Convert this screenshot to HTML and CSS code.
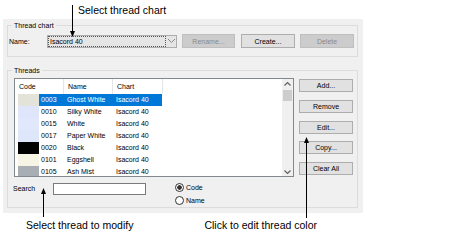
FILE: index.html
```html
<!DOCTYPE html>
<html lang="en">
<head>
	<meta charset="utf-8">
	<title>Thread chart</title>
	<link rel="stylesheet" href="styles.css">
</head>
<body>
<div class="page">

<div class="note top">Select thread chart</div>

<div class="dialog">
    <div class="group chart-group">
        <span class="legend">Thread chart</span>
        <div class="name-row">
            <label class="name-label">Name:</label>
            <div class="combo">
                <span class="value">Isacord 40</span>
                <svg class="chev" width="9" height="6" viewBox="0 0 9 6"><polyline points="1,1 4.5,4.5 8,1" fill="none" stroke="#8a8a8a" stroke-width="1"/></svg>
            </div>
            <button class="btn rename" disabled>Rename...</button>
            <button class="btn create">Create...</button>
            <button class="btn delete" disabled>Delete</button>
        </div>
    </div>

    <div class="group threads">
        <span class="legend">Threads</span>
        <div class="threads-body">
            <div class="list">
                <div class="table">
                    <div class="head">
                        <div class="col h-code">Code</div>
                        <div class="col h-name">Name</div>
                        <div class="col h-chart">Chart</div>
                    </div>
                    <div class="row selected">
                        <div class="swatch" style="background:#e4e3da"></div>
                        <div class="cells"><span class="c-code">0003</span><span class="c-name">Ghost White</span><span class="c-chart">Isacord 40</span></div>
                    </div>
                    <div class="row">
                        <div class="swatch" style="background:#dfe6fb"></div>
                        <div class="cells"><span class="c-code">0010</span><span class="c-name">Silky White</span><span class="c-chart">Isacord 40</span></div>
                    </div>
                    <div class="row">
                        <div class="swatch" style="background:#e1e8fb"></div>
                        <div class="cells"><span class="c-code">0015</span><span class="c-name">White</span><span class="c-chart">Isacord 40</span></div>
                    </div>
                    <div class="row">
                        <div class="swatch" style="background:#dee6fa"></div>
                        <div class="cells"><span class="c-code">0017</span><span class="c-name">Paper White</span><span class="c-chart">Isacord 40</span></div>
                    </div>
                    <div class="row">
                        <div class="swatch" style="background:#000000"></div>
                        <div class="cells"><span class="c-code">0020</span><span class="c-name">Black</span><span class="c-chart">Isacord 40</span></div>
                    </div>
                    <div class="row">
                        <div class="swatch" style="background:#f6f4e4"></div>
                        <div class="cells"><span class="c-code">0101</span><span class="c-name">Eggshell</span><span class="c-chart">Isacord 40</span></div>
                    </div>
                    <div class="row">
                        <div class="swatch" style="background:#a9aeb5"></div>
                        <div class="cells"><span class="c-code">0105</span><span class="c-name">Ash Mist</span><span class="c-chart">Isacord 40</span></div>
                    </div>
                </div>
                <div class="scrollbar">
                    <svg width="11" height="8" viewBox="0 0 11 8"><polyline points="2.5,5.5 5.5,2.5 8.5,5.5" fill="none" stroke="#606060" stroke-width="1.2"/></svg>
                    <div class="thumb"></div>
                    <div class="track"></div>
                    <svg width="11" height="8" viewBox="0 0 11 8"><polyline points="2.5,2.5 5.5,5.5 8.5,2.5" fill="none" stroke="#606060" stroke-width="1.2"/></svg>
                </div>
            </div>
            <div class="side">
                <button class="btn">Add...</button>
                <button class="btn">Remove</button>
                <button class="btn">Edit...</button>
                <button class="btn">Copy...</button>
                <button class="btn">Clear All</button>
            </div>
        </div>
        <div class="search-row">
            <label class="search-label">Search</label>
            <input class="search" type="text">
            <div class="radios">
                <div class="radio"><span class="dot checked"></span>Code</div>
                <div class="radio"><span class="dot"></span>Name</div>
            </div>
        </div>
    </div>
</div>

<div class="notes">
    <span class="note left">Select thread to modify</span>
    <span class="note right">Click to edit thread color</span>
</div>

<!-- callout arrows drawn over the dialog -->
<svg class="arrows" width="454" height="239" viewBox="0 0 454 239">
    <line x1="72.5" y1="5" x2="72.5" y2="32" stroke="#000" stroke-width="1"/>
    <polygon points="70,31 75,31 72.5,37" fill="#000"/>
    <line x1="43.5" y1="193" x2="43.5" y2="217" stroke="#000" stroke-width="1"/>
    <polygon points="41,194 46,194 43.5,188" fill="#000"/>
    <line x1="306.5" y1="142" x2="306.5" y2="218" stroke="#000" stroke-width="1"/>
    <polygon points="304,143 309,143 306.5,137" fill="#000"/>
</svg>

</div>
</body>
</html>
```

FILE: styles.css
```css
body {
    margin: 0;
    background: #fff;
    font-family: "Liberation Sans", Arial, sans-serif;
}
.page {
    position: relative;
    width: 454px;
    height: 239px;
}
.note {
    font-size: 10.5px;
    line-height: 14px;
    color: #000;
}
.note.top {
    height: 16px;
    padding: 3px 0 0 78px;
}

.dialog {
    box-sizing: border-box;
    margin-left: 3px;
    width: 360px;
    height: 194px;
    background: #f0f0f0;
    padding: 6px 0 0 4px;
    font-size: 7px;
    color: #000;
}
.group {
    position: relative;
    box-sizing: border-box;
    width: 351px;
    border: 1px solid #dcdcdc;
}
.group .legend {
    position: absolute;
    top: -5px;
    left: 4px;
    padding: 0 2px;
    background: #f0f0f0;
    line-height: 9px;
}

.btn {
    box-sizing: border-box;
    height: 14px;
    margin: 0;
    padding: 0;
    border: 1px solid #adadad;
    background: #e1e1e1;
    font-family: "Liberation Sans", Arial, sans-serif;
    font-size: 7px;
    color: #000;
}
.btn:disabled {
    background: #cccccc;
    border-color: #bfbfbf;
    color: #8a8a8a;
}

/* thread chart */
.chart-group { height: 32px; padding-top: 8px; }
.name-row {
    display: flex;
    align-items: center;
    height: 14px;
}
.name-label { width: 38px; padding-left: 1px; }
.combo {
    box-sizing: border-box;
    display: flex;
    align-items: center;
    width: 130px;
    height: 13px;
    border: 1px solid #adadad;
    background: #e5e5e5;
}
.combo .value {
    box-sizing: border-box;
    width: 118px;
    height: 11px;
    line-height: 9px;
    padding-left: 1px;
    border: 1px dotted #555;
}
.combo .chev { margin-left: 1px; }
.rename { width: 53px; margin-left: 5px; }
.create { width: 54px; margin-left: 6px; }
.delete { width: 54px; margin-left: 5px; }

/* threads */
.threads {
    height: 138px;
    margin-top: 13px;
    padding: 7px 0 0 6px;
}
.threads-body { display: flex; }
.list {
    box-sizing: border-box;
    display: flex;
    width: 280px;
    height: 99px;
    border: 1px solid #828790;
    background: #fff;
    overflow: hidden;
}
.table { flex: 1; }
.head {
    display: flex;
    height: 15px;
    line-height: 15px;
}
.head .col {
    box-sizing: border-box;
    padding-left: 4px;
    border-right: 1px solid #e5e5e5;
}
.h-code { width: 49px; }
.h-name { width: 49px; }
.h-chart { width: 50px; }
.row {
    display: flex;
    height: 12px;
    line-height: 12px;
}
.swatch {
    width: 21px;
    margin-left: 3px;
}
.cells { display: flex; width: 123px; }
.row.selected .cells { background: #0078d7; color: #fff; }
.c-code { width: 22px; padding-left: 2px; }
.c-name { width: 45px; padding-left: 4px; }
.c-chart { width: 46px; padding-left: 4px; }

.scrollbar {
    display: flex;
    flex-direction: column;
    width: 11px;
    background: #f0f0f0;
}
.scrollbar svg { margin-top: 1px; }
.scrollbar .thumb {
    height: 11px;
    margin: 2px 1px 0;
    background: #cdcdcd;
}
.scrollbar .track { flex: 1; }

.side {
    display: flex;
    flex-direction: column;
    gap: 7.75px;
    margin-left: 5px;
    padding-top: 1px;
}
.side .btn { width: 54px; height: 13px; }

.search-row {
    display: flex;
    align-items: flex-start;
    margin-top: 6px;
    padding-left: 5px;
    margin-left: -6px;
}
.search-label { width: 40px; line-height: 9px; padding-top: 1px; }
.search {
    box-sizing: border-box;
    width: 93px;
    height: 12px;
    margin: 0;
    border: 1px solid #7a7a7a;
    background: #fff;
}
.radios { margin-left: 29px; margin-top: -2px; }
.radio {
    display: flex;
    align-items: center;
    height: 13px;
}
.dot {
    box-sizing: border-box;
    width: 9px;
    height: 9px;
    margin-right: 2px;
    border: 1px solid #333;
    border-radius: 50%;
    background: #fff;
}
.dot.checked { background: radial-gradient(circle, #333 0 2px, #fff 2.5px); }

/* bottom callouts */
.notes {
    display: flex;
    padding-top: 5px;
}
.notes .left { margin-left: 26px; }
.notes .right { margin-left: 71px; }

.arrows {
    position: absolute;
    top: 0;
    left: 0;
    pointer-events: none;
}
```
